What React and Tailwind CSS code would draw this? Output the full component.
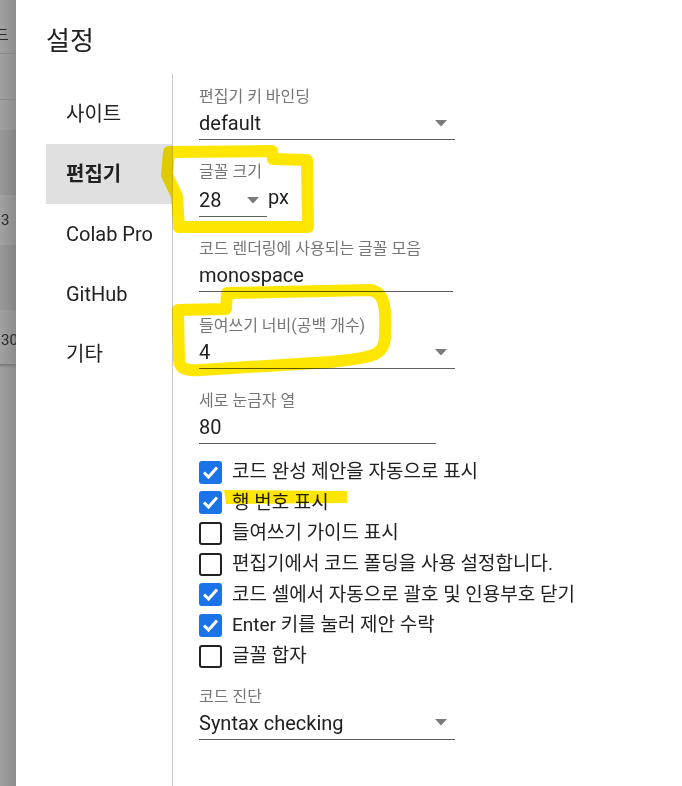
import React from "react";

const font = { fontFamily: "Roboto, 'Noto Sans CJK KR', sans-serif" };

const Arrow = () => (
  <svg width="12" height="7" viewBox="0 0 12 7" className="shrink-0">
    <path d="M0 0 H12 L6 6.5 Z" fill="#7a7a7a" />
  </svg>
);

const Field = ({ label, value, width, select, suffix, extra }) => (
  <div className={"flex flex-col " + (extra || "")}>
    <div className="h-[20px] text-[16px] leading-[20px] text-[#757575]">{label}</div>
    <div className="flex items-end">
      <div
        className="flex h-[33px] items-center justify-between border-b border-[#5f5f5f] pr-[8px] text-[20px] text-[#212121]"
        style={{ width }}
      >
        <span>{value}</span>
        {select && <Arrow />}
      </div>
      {suffix && <span className="mb-[5px] ml-[1px] text-[20px] text-[#212121]">{suffix}</span>}
    </div>
  </div>
);

const Check = ({ on, label }) => (
  <div className="flex h-[30.67px] items-center gap-[10px]">
    {on ? (
      <div className="flex h-[23px] w-[23px] items-center justify-center rounded-[3px] bg-[#1a73e8]">
        <svg width="23" height="23" viewBox="0 0 23 23">
          <path d="M5 11.5 L9.5 16 L18 6.5" fill="none" stroke="#fff" strokeWidth="3" />
        </svg>
      </div>
    ) : (
      <div className="h-[23px] w-[23px] rounded-[3px] border-2 border-[#212121]" />
    )}
    <span className="text-[19px] text-[#212121]">{label}</span>
  </div>
);

const navItems = ["사이트", "편집기", "Colab Pro", "GitHub", "기타"];

export default function App() {
  return (
    <div className="relative flex h-[786px] w-[682px] overflow-hidden bg-white" style={font}>
      {/* background page peeking out on the left */}
      <div className="flex w-[16px] shrink-0 flex-col overflow-hidden bg-gradient-to-r from-[#a2a2a2] to-[#8c8c8c] text-[15px] text-[#2a2a2a]">
        <div className="flex h-[54px] items-center border-b border-[#878787] pt-[18px] pl-[1px]">
          <span className="-ml-[6px]">드</span>
        </div>
        <div className="h-[46px] border-b border-[#878787]" />
        <div className="h-[30px]" />
        <div className="h-[65px] bg-[#000]/5" />
        <div className="flex h-[50px] items-center pl-[1px]">3</div>
        <div className="h-[65px] bg-[#000]/5" />
        <div className="flex h-[54px] items-center pl-[1px] pt-[6px]">30</div>
        <div className="h-[4px] bg-gradient-to-b from-[#777] to-transparent" />
        <div className="flex-1" />
      </div>

      {/* dialog */}
      <div className="flex flex-1 flex-col bg-white">
        <div className="h-[74px] pl-[30px] pt-[24px] text-[26px] leading-[34px] text-[#212121]">설정</div>
        <div className="flex flex-1">
          <div className="w-[157px] shrink-0 border-r border-[#c8c8c8] pl-[30px] pt-[10px]">
            {navItems.map((n) => (
              <div
                key={n}
                className={
                  "flex h-[60px] items-center pl-[20px] text-[20px] text-[#212121] " +
                  (n === "편집기" ? "bg-[#e0e0e0] font-bold" : "")
                }
              >
                {n}
              </div>
            ))}
          </div>

          <div className="flex flex-col pl-[26px] pt-[13px]">
            <div className="flex flex-col gap-[22px]">
              <Field label="편집기 키 바인딩" value="default" width={256} select />
              <Field label="글꼴 크기" value="28" width={68} select suffix="px" />
              <Field label="코드 렌더링에 사용되는 글꼴 모음" value="monospace" width={254} />
              <Field label="들여쓰기 너비(공백 개수)" value="4" width={256} select extra="mt-[2px]" />
              <Field label="세로 눈금자 열" value="80" width={237} />
            </div>
            <div className="mt-[13px] flex flex-col">
              <Check on label="코드 완성 제안을 자동으로 표시" />
              <Check on label="행 번호 표시" />
              <Check label="들여쓰기 가이드 표시" />
              <Check label="편집기에서 코드 폴딩을 사용 설정합니다." />
              <Check on label="코드 셀에서 자동으로 괄호 및 인용부호 닫기" />
              <Check on label="Enter 키를 눌러 제안 수락" />
              <Check label="글꼴 합자" />
            </div>
            <div className="mt-[15px]">
              <Field label="코드 진단" value="Syntax checking" width={256} select />
            </div>
          </div>
        </div>
      </div>

      {/* highlighter annotations */}
      <svg
        className="pointer-events-none absolute left-0 top-0 mix-blend-multiply"
        width="682"
        height="786"
        viewBox="0 0 682 786"
      >
        <g fill="none" stroke="#ffe600" strokeWidth="12" strokeLinejoin="round" strokeLinecap="round">
          <path d="M169,152 L272,151 L273,159 L307,160 L308,227 L179,227 L177,196 L167,175 Z" />
          <path d="M178,310 L226,309 L227,293 L370,290 C386,292 386,310 385,338 C384,356 370,358 330,362 L200,370 C184,371 180,368 179,360 Z" />
        </g>
        <path d="M224,490 L347,491 L347,503 L226,504 Z" fill="#ffe600" />
      </svg>
    </div>
  );
}
